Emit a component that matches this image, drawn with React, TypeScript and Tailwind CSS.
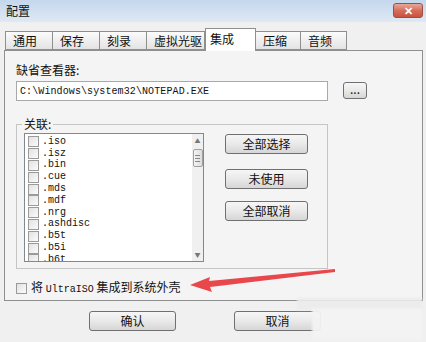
import React from 'react';

const tabs = ['通用', '保存', '刻录', '虚拟光驱', '集成', '压缩', '音频'];
const tabWidths = [48, 48, 48, 59, 51, 46, 47];
const exts = ['.iso', '.isz', '.bin', '.cue', '.mds', '.mdf', '.nrg', '.ashdisc', '.b5t', '.b5i', '.b6t'];

const cjk = { fontFamily: '"Noto Sans CJK SC", "Noto Sans", sans-serif' };
const mono = { fontFamily: '"Liberation Mono", "DejaVu Sans Mono", monospace' };

const Btn: React.FC<{ label: string; className?: string }> = ({ label, className }) => (
  <div
    className={
      'flex items-center justify-center rounded-[3px] border border-[#707070] bg-gradient-to-b from-[#f6f6f6] via-[#e9e9e9] to-[#d6d6d6] text-[12px] leading-none text-[#111] ' +
      (className ?? '')
    }
  >
    {label}
  </div>
);

const Box: React.FC = () => (
  <div className="h-[11px] w-[11px] border border-[#9a9a9a] bg-gradient-to-br from-[#e2e2e2] to-[#fbfbfb]" />
);

export default function App() {
  return (
    <div className="relative h-[342px] w-[426px] overflow-hidden bg-[#f0f0f0] text-[#111]" style={cjk}>
      {/* title bar */}
      <div className="flex h-[22px] items-start justify-between bg-gradient-to-b from-[#c4d7ec] to-[#dfe9f4] pl-[6px] pr-[3px]">
        <span className="mt-[3px] text-[12px] leading-[16px]">配置</span>
        <div className="mt-[3px] flex h-[15px] w-[30px] items-center justify-center rounded-[3px] border border-[#9b5046] bg-gradient-to-b from-[#e8a89a] via-[#d66d5b] to-[#c9523f] text-[11px] font-bold leading-none text-white">
          ✕
        </div>
      </div>

      {/* tabs */}
      <div className="mt-[6px] flex h-[22px] items-end pl-[5px]">
        {tabs.map((t, i) =>
          t === '集成' ? (
            <div
              key={t}
              style={{ width: tabWidths[i] }}
              className="relative z-10 -mb-px h-[23px] border border-b-0 border-[#8e8f8f] bg-white pl-[4px] pt-[2px] text-[12px] leading-[16px]"
            >
              {t}
            </div>
          ) : (
            <div
              key={t}
              style={{ width: tabWidths[i] }}
              className="-ml-px h-[19px] border border-[#8e8f8f] bg-gradient-to-b from-[#fbfbfb] to-[#e3e3e3] pl-[7px] pt-[1px] text-[12px] leading-[16px] first:ml-0"
            >
              {t}
            </div>
          )
        )}
      </div>

      {/* panel */}
      <div className="ml-[4px] h-[251px] w-[419px] border border-[#8e8f8f] bg-[#f4f4f4] pl-[11px] pt-[12px]">
        <div className="text-[12px] leading-[14px]">缺省查看器:</div>
        <div className="mt-[4px] flex items-start gap-[15px]">
          <div
            className="flex h-[20px] w-[312px] items-center border border-[#a9a9a9] bg-white pl-[3px] text-[10px] tracking-[0.1px]"
            style={mono}
          >
            C:\Windows\system32\NOTEPAD.EXE
          </div>
          <Btn label="..." className="mt-[1px] h-[17px] w-[24px] pb-[3px]" />
        </div>

        {/* association group */}
        <div className="relative mt-[23px] flex h-[145px] w-[312px] border border-[#c5c5c5] pl-[7px] pt-[8px]">
          <span className="absolute -top-[8px] left-[5px] bg-[#f4f4f4] px-[2px] text-[12px] leading-[14px]">关联:</span>
          <div className="relative flex h-[129px] w-[180px] overflow-hidden border border-[#828790] bg-white">
            <div className="flex-1 pl-[3px] pt-[2px]">
              {exts.map((e) => (
                <div key={e} className="flex h-[11.8px] items-center gap-[3px]">
                  <Box />
                  <span className="text-[10px] leading-none" style={mono}>
                    {e}
                  </span>
                </div>
              ))}
            </div>
            {/* scrollbar */}
            <div className="flex w-[11px] flex-col items-center bg-[#f0f0f0]">
              <span className="mt-[4px] text-[6px] leading-none text-[#777]">▲</span>
              <div className="mt-[5px] flex h-[18px] w-[10px] flex-col items-center justify-center gap-[2px] rounded-[2px] border border-[#a0a0a0] bg-gradient-to-r from-[#f4f4f4] to-[#dcdcdc]">
                <div className="h-px w-[5px] bg-[#888]" />
                <div className="h-px w-[5px] bg-[#888]" />
                <div className="h-px w-[5px] bg-[#888]" />
              </div>
              <span className="mb-[3px] mt-auto text-[6px] leading-none text-[#777]">▼</span>
            </div>
          </div>
          <div className="ml-[21px] flex flex-col pt-[1px]">
            <Btn label="全部选择" className="h-[20px] w-[83px]" />
            <Btn label="未使用" className="mt-[15px] h-[20px] w-[83px]" />
            <Btn label="全部取消" className="mt-[12px] h-[20px] w-[83px]" />
          </div>
        </div>

        <div className="mt-[11px] flex items-center gap-[4px] text-[12px] leading-[14px]">
          <Box />
          <span>
            将 <span className="text-[10px]" style={mono}>UltraISO</span> 集成到系统外壳
          </span>
        </div>
      </div>

      {/* bottom buttons */}
      <div className="mt-[10px] flex pl-[89px]">
        <Btn label="确认" className="h-[20px] w-[87px]" />
        <Btn label="取消" className="ml-[58px] h-[20px] w-[87px]" />
      </div>

      {/* red annotation arrow */}
      <svg className="absolute left-[188px] top-[264px]" width="150" height="32" viewBox="0 0 150 32">
        <path d="M2 21 L22 13 L21 17 L147 5 L147 8 L22 23 L24 28 Z" fill="#e8474b" />
      </svg>

      {/* blurred watermark */}
      <div className="absolute left-[297px] top-[298px] h-[12px] w-[125px] bg-[#ebebeb]/90 blur-[1px]" />
      <div className="absolute left-[312px] top-[308px] h-[32px] w-[110px] bg-[#f2f2f2]/95 blur-[1px]" />
    </div>
  );
}
